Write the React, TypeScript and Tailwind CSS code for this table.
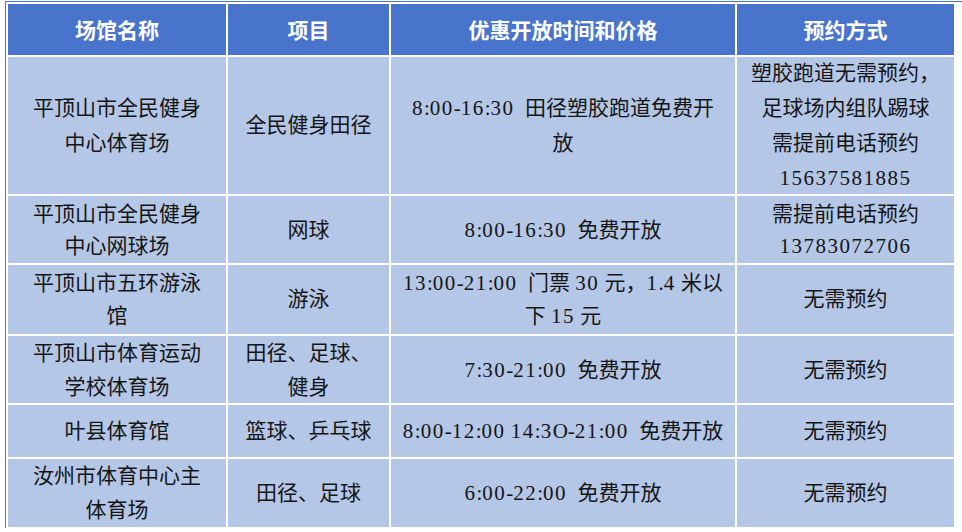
import React from "react";

type Row = {
  name: string[];
  item: string[];
  time: string[];
  booking: string[];
  height: string;
  leading: string;
};

// Rows of the venue table, lines broken as in the source document
const rows: Row[] = [
  {
    name: ["平顶山市全民健身", "中心体育场"],
    item: ["全民健身田径"],
    time: ["8:00-16:30  田径塑胶跑道免费开", "放"],
    booking: ["塑胶跑道无需预约，", "足球场内组队踢球", "需提前电话预约", "15637581885"],
    height: "h-[137px]",
    leading: "leading-[35px]",
  },
  {
    name: ["平顶山市全民健身", "中心网球场"],
    item: ["网球"],
    time: ["8:00-16:30  免费开放"],
    booking: ["需提前电话预约", "13783072706"],
    height: "h-[67px]",
    leading: "leading-[32px]",
  },
  {
    name: ["平顶山市五环游泳", "馆"],
    item: ["游泳"],
    time: ["13:00-21:00  门票 30 元，1.4 米以", "下 15 元"],
    booking: ["无需预约"],
    height: "h-[69px]",
    leading: "leading-[33px]",
  },
  {
    name: ["平顶山市体育运动", "学校体育场"],
    item: ["田径、足球、", "健身"],
    time: ["7:30-21:00  免费开放"],
    booking: ["无需预约"],
    height: "h-[67px]",
    leading: "leading-[34px]",
  },
  {
    name: ["叶县体育馆"],
    item: ["篮球、乒乓球"],
    time: ["8:00-12:00 14:3O-21:00  免费开放"],
    booking: ["无需预约"],
    height: "h-[52px]",
    leading: "leading-[34px]",
  },
  {
    name: ["汝州市体育中心主", "体育场"],
    item: ["田径、足球"],
    time: ["6:00-22:00  免费开放"],
    booking: ["无需预约"],
    height: "h-[68px]",
    leading: "leading-[34px]",
  },
];

const headers = ["场馆名称", "项目", "优惠开放时间和价格", "预约方式"];

// digits in the source are a bit wider than Liberation Serif's
const Line = ({ text }: { text: string }) => (
  <span>
    {text.split(/(\d+)/).map((part, i) =>
      /^\d+$/.test(part) ? (
        <span key={i} className="tracking-[1.5px]">
          {part}
        </span>
      ) : (
        part
      ),
    )}
  </span>
);

const Cell = ({ lines, className }: { lines: string[]; className: string }) => (
  <div className={`flex flex-col items-center justify-center bg-[#b4c7e7] text-center whitespace-pre ${className}`}>
    {lines.map((l, i) => (
      <Line key={i} text={l} />
    ))}
  </div>
);

export default function App() {
  return (
    <div className="w-[962px] h-[532px] bg-white pt-px pl-[5px]">
      <div className="border-l border-t border-[#4a76c8] pl-[2px] pt-[2px] pb-px">
        <div
          className="grid grid-cols-[218px_161px_344px_217px] gap-[2px] bg-white text-[21px] text-[#151515]"
          style={{ fontFamily: '"Liberation Serif", "Noto Sans CJK SC", serif' }}
        >
          {headers.map((h) => (
            <div
              key={h}
              className="h-[51px] flex items-center justify-center bg-[#4874cb] text-white font-bold"
              style={{ fontFamily: '"Noto Sans CJK SC", sans-serif' }}
            >
              {h}
            </div>
          ))}
          {rows.map((r, i) => (
            <React.Fragment key={i}>
              <Cell lines={r.name} className={`${r.height} ${r.leading}`} />
              <Cell lines={r.item} className={`${r.height} ${r.leading}`} />
              <Cell lines={r.time} className={`${r.height} ${r.leading}`} />
              <Cell lines={r.booking} className={`${r.height} ${r.leading}`} />
            </React.Fragment>
          ))}
        </div>
      </div>
    </div>
  );
}
